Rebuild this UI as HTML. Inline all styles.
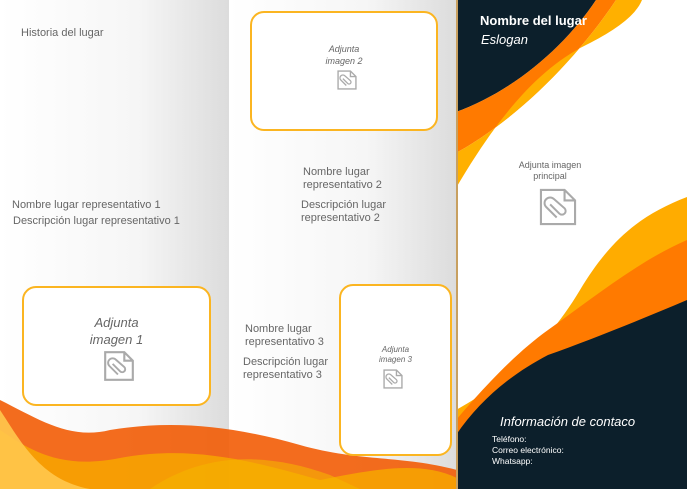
<!DOCTYPE html>
<html><head><meta charset="utf-8"><style>
*{margin:0;padding:0;box-sizing:border-box}
body{width:687px;height:489px;overflow:hidden;position:relative;font-family:"Liberation Sans",sans-serif;color:#666;background:#fff}
.p{position:absolute;top:0;height:489px;background:linear-gradient(90deg,#fff 0%,#f6f6f6 60%,#dcdcdc 100%)}
.t{position:absolute;font-size:11px;line-height:13px;white-space:nowrap}
.box{position:absolute;border:2px solid #fbb521;border-radius:14px;background:#fff}
.c{text-align:center}
svg{position:absolute}
</style></head><body>
<div class="p" style="left:0;width:229px"></div>
<div class="p" style="left:229px;width:228px"></div>

<svg width="457" height="489" style="left:0;top:0" viewBox="0 0 457 489">
<path d="M0,400 C40,420 70,440 110,430 C170,420 230,425 300,445 C360,462 400,455 457,470 L457,489 L0,489Z" fill="#f25c05" opacity="0.9"/>
<path d="M0,430 C30,450 60,470 120,458 C190,445 250,460 320,480 C370,470 420,460 457,478 L457,489 L0,489Z" fill="#f7a600" opacity="0.85"/>
<path d="M0,410 C20,440 40,480 90,489 L0,489Z" fill="#ffc84d" opacity="0.9"/>
<path d="M150,489 C200,455 260,450 330,475 L360,489Z" fill="#f5b400" opacity="0.6"/>
</svg>

<div style="position:absolute;left:456px;top:0;width:231px;height:489px;background:#fff"></div>
<svg width="231" height="489" style="left:456px;top:0" viewBox="0 0 231 489">
<path d="M0,0 L140,0 C110,45 60,90 0,112 Z" fill="#0c1f2b"/>
<path d="M0,112 C60,90 110,45 140,0 L160,0 C120,60 60,120 0,153Z" fill="#ff7a00"/>
<path d="M0,188 C40,120 80,70 130,45 C160,30 180,15 186,0 L160,0 C120,60 60,120 0,153Z" fill="#ffb000"/>
<path d="M231,197 C184,215 154,240 124,290 C94,340 54,380 0,410 L0,489 L231,489Z" fill="#ffac00"/>
<path d="M231,240 C184,260 134,300 92,330 C64,350 34,380 0,420 L0,489 L231,489Z" fill="#ff7a00"/>
<path d="M231,300 C184,320 134,340 92,355 C54,375 24,400 0,435 L0,489 L231,489Z" fill="#0c1f2b"/>
<rect x="0" y="0" width="2" height="489" fill="#c8a060"/>
</svg>

<div class="t" style="left:21px;top:27px">Historia del lugar</div>
<div class="t" style="left:12px;top:199px">Nombre lugar representativo 1</div>
<div class="t" style="left:13px;top:215px">Descripción lugar representativo 1</div>

<div class="box" style="left:22px;top:286px;width:189px;height:120px"></div>
<div class="t c" style="left:22px;top:314px;width:189px;font-size:13px;line-height:17px;font-style:italic">Adjunta<br>imagen 1</div>

<div class="box" style="left:250px;top:11px;width:188px;height:120px"></div>
<div class="t c" style="left:250px;top:43px;width:188px;font-size:9px;line-height:12px;font-style:italic">Adjunta<br>imagen 2</div>
<div class="t" style="left:303px;top:166px;line-height:13px">Nombre lugar<br>representativo 2</div>
<div class="t" style="left:301px;top:199px;line-height:13px">Descripción lugar<br>representativo 2</div>

<div class="box" style="left:339px;top:284px;width:113px;height:172px"></div>
<div class="t c" style="left:339px;top:345px;width:113px;font-size:8px;line-height:10px;font-style:italic">Adjunta<br>imagen 3</div>
<div class="t" style="left:245px;top:323px;line-height:13px">Nombre lugar<br>representativo 3</div>
<div class="t" style="left:243px;top:356px;line-height:13px">Descripción lugar<br>representativo 3</div>

<svg width="34" height="34" style="left:102px;top:349px" viewBox="0 0 32 32"><path d="M3,3 H21 L29,11 V29 H3Z M21,3 V11 H29" fill="none" stroke="#aaa" stroke-width="2"/><path d="M10,14 L17,21 a2.5,2.5 0 0 0 4,-4 L13,10 a4,4 0 0 0 -6,6 L15,24" fill="none" stroke="#aaa" stroke-width="1.8"/></svg>
<svg width="22" height="22" style="left:336px;top:69px" viewBox="0 0 32 32"><path d="M3,3 H21 L29,11 V29 H3Z M21,3 V11 H29" fill="none" stroke="#aaa" stroke-width="2"/><path d="M10,14 L17,21 a2.5,2.5 0 0 0 4,-4 L13,10 a4,4 0 0 0 -6,6 L15,24" fill="none" stroke="#aaa" stroke-width="1.8"/></svg>
<svg width="22" height="22" style="left:382px;top:368px" viewBox="0 0 32 32"><path d="M3,3 H21 L29,11 V29 H3Z M21,3 V11 H29" fill="none" stroke="#aaa" stroke-width="2"/><path d="M10,14 L17,21 a2.5,2.5 0 0 0 4,-4 L13,10 a4,4 0 0 0 -6,6 L15,24" fill="none" stroke="#aaa" stroke-width="1.8"/></svg>
<svg width="42" height="42" style="left:537px;top:186px" viewBox="0 0 32 32"><path d="M3,3 H21 L29,11 V29 H3Z M21,3 V11 H29" fill="none" stroke="#aaa" stroke-width="1.6"/><path d="M10,14 L17,21 a2.5,2.5 0 0 0 4,-4 L13,10 a4,4 0 0 0 -6,6 L15,24" fill="none" stroke="#aaa" stroke-width="1.5"/></svg>

<div class="t" style="left:480px;top:14px;font-size:13px;font-weight:bold;color:#fff">Nombre del lugar</div>
<div class="t" style="left:481px;top:33px;font-size:13px;font-style:italic;color:#fff">Eslogan</div>
<div class="t c" style="left:500px;top:160px;width:100px;font-size:9px;line-height:11px">Adjunta imagen<br>principal</div>
<div class="t" style="left:500px;top:415px;font-size:13px;font-style:italic;color:#fff">Información de contaco</div>
<div class="t" style="left:492px;top:434px;font-size:8.5px;line-height:11px;color:#fff">Teléfono:<br>Correo electrónico:<br>Whatsapp:</div>
</body></html>
